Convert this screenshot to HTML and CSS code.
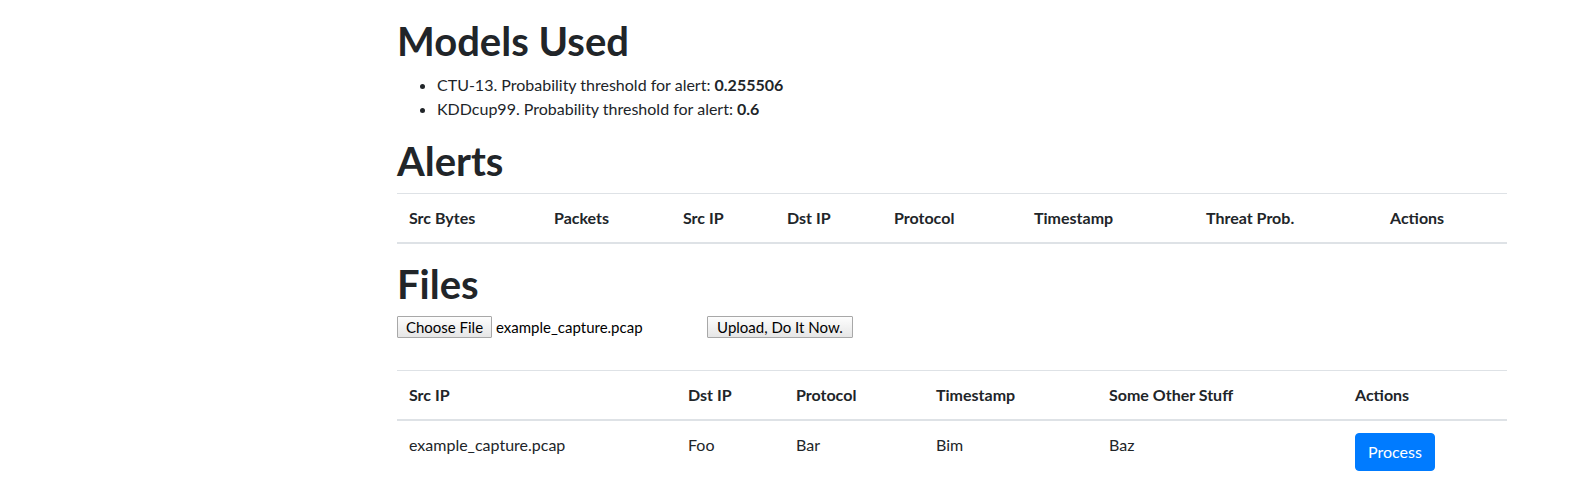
FILE: index.html
```html
<!DOCTYPE html>
<html lang="en">
<head>
<meta charset="utf-8">
<title>Models Used</title>
<link rel="stylesheet" href="styles.css">
</head>
<body>
<main class="page">
  <h1 class="title">Models Used</h1>
  <ul class="models">
    <li>CTU-13. Probability threshold for alert: <b>0.255506</b></li>
    <li>KDDcup99. Probability threshold for alert: <b>0.6</b></li>
  </ul>

  <h1 class="title">Alerts</h1>
  <table class="table">
    <colgroup>
      <col class="a1"><col class="a2"><col class="a3"><col class="a4">
      <col class="a5"><col class="a6"><col class="a7"><col class="a8">
    </colgroup>
    <thead>
      <tr>
        <th>Src Bytes</th>
        <th>Packets</th>
        <th>Src IP</th>
        <th>Dst IP</th>
        <th>Protocol</th>
        <th>Timestamp</th>
        <th>Threat Prob.</th>
        <th>Actions</th>
      </tr>
    </thead>
    <tbody></tbody>
  </table>

  <h1 class="title">Files</h1>
  <form class="upload">
    <div class="file-field">
      <span class="sys-btn file-btn">Choose File</span>
      <span class="file-name">example_capture.pcap</span>
    </div>
    <button type="button" class="sys-btn upload-btn">Upload, Do It Now.</button>
  </form>

  <table class="table">
    <colgroup>
      <col class="f1"><col class="f2"><col class="f3">
      <col class="f4"><col class="f5"><col class="f6">
    </colgroup>
    <thead>
      <tr>
        <th>Src IP</th>
        <th>Dst IP</th>
        <th>Protocol</th>
        <th>Timestamp</th>
        <th>Some Other Stuff</th>
        <th>Actions</th>
      </tr>
    </thead>
    <tbody>
      <tr>
        <td>example_capture.pcap</td>
        <td>Foo</td>
        <td>Bar</td>
        <td>Bim</td>
        <td>Baz</td>
        <td><button type="button" class="btn-primary">Process</button></td>
      </tr>
    </tbody>
  </table>
</main>
</body>
</html>
```

FILE: styles.css
```css
* {
  box-sizing: border-box;
}

html, body {
  margin: 0;
  background: #fff;
}

body {
  font-family: Lato, "Noto Sans", "Liberation Sans", sans-serif;
  font-size: 16px;
  line-height: 1.5;
  color: #212529;
}

.page {
  width: 1110px;
  margin-left: 397px;
  padding-top: 17px;
}

.title {
  margin: 0 0 8px;
  font-size: 40px;
  line-height: 1.2;
  font-weight: 700;
}

.models {
  margin: 0 0 16px;
  padding-left: 40px;
}

.models b {
  font-weight: 700;
}

.table {
  width: 100%;
  table-layout: fixed;
  border-collapse: collapse;
  margin-bottom: 16px;
  color: #212529;
}

.table th,
.table td {
  padding: 12px;
  text-align: left;
  vertical-align: top;
  border-top: 1px solid #dee2e6;
}

.table th {
  font-weight: 700;
}

.table thead th {
  vertical-align: bottom;
  border-bottom: 2px solid #dee2e6;
}

.a1 { width: 145px; }
.a2 { width: 129px; }
.a3 { width: 104px; }
.a4 { width: 107px; }
.a5 { width: 140px; }
.a6 { width: 172px; }
.a7 { width: 184px; }
.a8 { width: 129px; }

.f1 { width: 279px; }
.f2 { width: 108px; }
.f3 { width: 140px; }
.f4 { width: 173px; }
.f5 { width: 246px; }
.f6 { width: 164px; }

.upload {
  display: flex;
  align-items: center;
  gap: 4px;
  height: 22px;
  margin-bottom: 32px;
}

.file-field {
  display: flex;
  align-items: center;
  width: 306px;
  gap: 4px;
}

.sys-btn {
  display: inline-flex;
  align-items: center;
  justify-content: center;
  height: 22px;
  padding: 0 6px;
  font-family: Lato, "Noto Sans", sans-serif;
  font-size: 15px;
  line-height: 1;
  color: #000;
  background: linear-gradient(#fdfdfd, #e6e6e6);
  border: 1px solid #a8a8a8;
  border-radius: 1px;
}

.file-btn {
  width: 95px;
}

.upload-btn {
  width: 146px;
}

.file-name {
  font-size: 15px;
  color: #000;
}

.btn-primary {
  display: inline-block;
  padding: 6px 12px;
  font-family: inherit;
  font-size: 16px;
  line-height: 1.5;
  color: #fff;
  background: #007bff;
  border: 1px solid #007bff;
  border-radius: 4px;
}
```
